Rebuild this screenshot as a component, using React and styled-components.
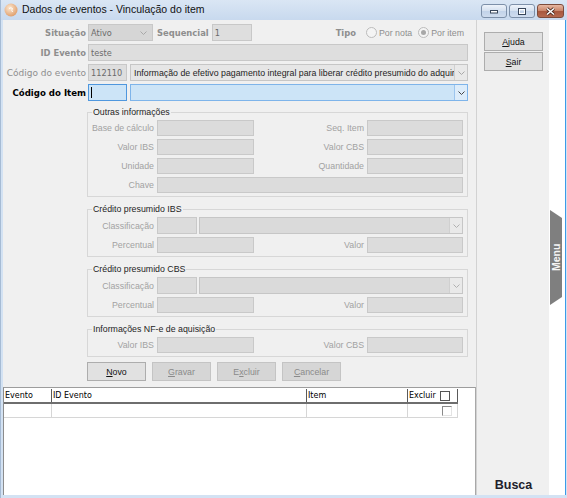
import React from "react";
import styled, { createGlobalStyle } from "styled-components";

const UI = `"Liberation Sans", Arial, sans-serif`;
const TAHOMA = `"DejaVu Sans", Verdana, sans-serif`;

const GlobalStyle = createGlobalStyle`
  html, body { margin: 0; padding: 0; }
  body { background: #ffffff; font-family: ${UI}; }
  * { box-sizing: border-box; }
`;

const Window = styled.div`
  width: 567px;
  height: 498px;
  display: flex;
  flex-direction: column;
  background: #d3e2f3;
  border-left: 1px solid #a6bbd4;
  overflow: hidden;
`;

const TitleBar = styled.div`
  height: 20px;
  flex: none;
  display: flex;
  align-items: flex-start;
  padding-left: 3px;
  background: linear-gradient(#dae6f4, #c8d9ee);
`;

const AppIcon = styled.svg`
  margin-top: 3px;
  flex: none;
`;

const Title = styled.span`
  margin: 3px 0 0 4px;
  font-family: ${UI};
  font-size: 10.5px;
  line-height: 13px;
  color: #111;
`;

const WinButtons = styled.div`
  margin: 4px 3px 0 auto;
  display: flex;
  gap: 2px;
`;

const WinButton = styled.div`
  width: ${(p) => (p.$close ? 27 : 26)}px;
  height: 14px;
  border: 1px solid ${(p) => (p.$close ? "#7c4b3b" : "#7d90a9")};
  border-radius: 3px;
  display: flex;
  align-items: center;
  justify-content: center;
  background: ${(p) =>
    p.$close
      ? "linear-gradient(#e7b7a2, #c98469 50%, #a8573d 52%, #b56a50)"
      : "linear-gradient(#eef3fa, #d4e0ef 50%, #c2d3e9 52%, #cfdcee)"};
`;

const Body = styled.div`
  flex: 1;
  display: flex;
  margin: 0 1px 3px 2px;
  min-height: 0;
`;

const Main = styled.div`
  width: 473px;
  flex: none;
  display: flex;
  flex-direction: column;
`;

const FormArea = styled.div`
  height: 367px;
  flex: none;
  background: #f0f0f0;
  padding-top: 4px;
  display: flex;
  flex-direction: column;
`;

const TopRows = styled.div`
  display: flex;
  flex-direction: column;
  gap: 3px;
`;

const Row = styled.div`
  display: flex;
  align-items: center;
  height: 17px;
  padding-right: ${(p) => p.$pr ?? 8}px;
`;

const Label = styled.span`
  width: ${(p) => (p.$w ? `${p.$w}px` : "auto")};
  flex: none;
  text-align: right;
  padding-right: ${(p) => p.$pr ?? 2}px;
  margin-left: ${(p) => p.$ml || 0}px;
  font-family: ${TAHOMA};
  font-size: ${(p) => p.$size || 8.4}px;
  font-weight: ${(p) => (p.$bold ? 700 : 400)};
  color: ${(p) => (p.$active ? "#000" : "#8e8e8e")};
  white-space: nowrap;
`;

const Field = styled.div`
  height: ${(p) => p.$h || 17}px;
  width: ${(p) => (p.$w ? `${p.$w}px` : "auto")};
  flex: ${(p) => (p.$w ? "none" : "1")};
  margin-left: ${(p) => p.$ml || 0}px;
  display: flex;
  align-items: center;
  padding: 0 2px;
  border: 1px solid ${(p) => (p.$focus ? "#4f97de" : "#c8c8c8")};
  background: ${(p) => (p.$focus ? "#cce4f7" : "#dedede")};
  font-family: ${TAHOMA};
  font-size: 8.2px;
  color: #6b6b6b;
  white-space: nowrap;
  overflow: hidden;
`;

const Caret = styled.span`
  width: 1px;
  height: 11px;
  background: #000;
`;

const Combo = styled.div`
  flex: 1;
  height: ${(p) => p.$h || 17}px;
  margin-left: ${(p) => p.$ml || 0}px;
  display: flex;
  align-items: stretch;
  border: 1px solid ${(p) => (p.$focus ? "#7eb4ea" : "#c6c6c6")};
  background: ${(p) => (p.$focus ? "#cce4f7" : p.$light ? "#e6e6e6" : "#dadada")};
  overflow: hidden;
`;

const ComboText = styled.span`
  flex: 1;
  min-width: 0;
  padding-left: 3px;
  display: flex;
  align-items: center;
  font-family: ${UI};
  font-size: 8.8px;
  color: #1e1e1e;
  white-space: nowrap;
  overflow: hidden;
`;

const ComboArrow = styled.span`
  width: 13px;
  flex: none;
  display: flex;
  align-items: center;
  justify-content: center;
  border-left: 1px solid ${(p) => (p.$focus ? "#9cc5ee" : "#d0d0d0")};
  background: ${(p) => (p.$focus ? "#dcecfa" : "#e9e9e9")};
`;

const Select = styled.div`
  width: 65px;
  flex: none;
  height: 17px;
  display: flex;
  align-items: center;
  justify-content: space-between;
  padding: 0 5px 0 2px;
  border: 1px solid #c8c8c8;
  background: #d6d6d6;
  font-family: ${TAHOMA};
  font-size: 8.2px;
  color: #6b6b6b;
`;

const Spacer = styled.span`
  flex: 1;
`;

const RadioGroup = styled.div`
  display: flex;
  align-items: center;
  gap: 6px;
  margin-left: 10px;
`;

const RadioItem = styled.label`
  display: flex;
  align-items: center;
  gap: 2px;
  font-family: ${UI};
  font-size: 8.8px;
  color: #8e8e8e;
`;

const RadioDot = styled.span`
  width: 11px;
  height: 11px;
  border-radius: 50%;
  border: 1px solid #bcbcbc;
  background: #f4f4f4;
  display: flex;
  align-items: center;
  justify-content: center;
  &::after {
    content: "";
    width: 5px;
    height: 5px;
    border-radius: 50%;
    background: ${(p) => (p.$checked ? "#a8a8a8" : "transparent")};
  }
`;

const Groups = styled.div`
  margin: 6px 8px 0 84px;
  display: flex;
  flex-direction: column;
  gap: 7px;
`;

const Group = styled.fieldset`
  margin: 0;
  padding: 3px 4px 3px 0;
  border: 1px solid #d7d7d7;
  display: flex;
  flex-direction: column;
  gap: 3px;
  min-width: 0;
`;

const Legend = styled.legend`
  margin-left: 4px;
  padding: 0 1px;
  font-family: ${UI};
  font-size: 8.8px;
  line-height: 10px;
  color: #1e1e1e;
`;

const GroupRow = styled.div`
  display: grid;
  grid-template-columns: 66px 97px 1fr 96px;
  column-gap: 3px;
  align-items: center;
  height: ${(p) => p.$h || 16}px;
`;

const GLabel = styled.span`
  text-align: right;
  font-family: ${UI};
  font-size: 8.8px;
  color: #a2a2a2;
  white-space: nowrap;
`;

const GField = styled.div`
  height: 100%;
  width: ${(p) => (p.$w ? `${p.$w}px` : "auto")};
  flex: none;
  grid-column: ${(p) => p.$span || "auto"};
  border: 1px solid #c9c9c9;
  background: #dcdcdc;
`;

const ClassBox = styled.div`
  grid-column: 2 / 5;
  height: 100%;
  display: flex;
  gap: 2px;
`;

const ButtonRow = styled.div`
  margin: 5px 0 0 84px;
  display: flex;
  gap: 6px;
`;

const Button = styled.div`
  width: 59px;
  height: 19px;
  flex: none;
  display: flex;
  align-items: center;
  justify-content: center;
  border: 1px solid ${(p) => (p.$disabled ? "#c4c4c4" : "#adadad")};
  background: ${(p) => (p.$disabled ? "#d6d6d6" : "#e1e1e1")};
  font-family: ${UI};
  font-size: 8.8px;
  color: ${(p) => (p.$disabled ? "#8a8a8a" : "#111")};
  u {
    text-decoration: underline;
  }
`;

const Grid = styled.div`
  flex: 1;
  background: #fff;
  border-top: 1px solid #9d9d9d;
  border-left: 1px solid #8c8c8c;
  border-right: 1px solid #a8a8a8;
  padding-top: 1px;
`;

const GridRow = styled.div`
  display: grid;
  grid-template-columns: 48px 255px 101px 50px;
  width: 454px;
  height: ${(p) => (p.$head ? 15 : 14)}px;
  border-bottom: ${(p) => (p.$head ? "2px solid #6e6e6e" : "1px solid #d6d6d6")};
`;

const Cell = styled.div`
  display: flex;
  align-items: center;
  padding-left: 1px;
  border-right: 1px solid ${(p) => (p.$head ? "#5a5a5a" : "#d6d6d6")};
  font-family: ${TAHOMA};
  font-size: 8px;
  color: #000;
  justify-content: ${(p) => (p.$check ? "flex-end" : "flex-start")};
  padding-right: ${(p) => (p.$check ? 5 : 0)}px;
  gap: 4px;
`;

const CheckBox = styled.span`
  width: 10px;
  height: 10px;
  border: 1px solid #555;
  background: #fff;
  ${(p) =>
    p.$sunken &&
    `border-color: #8a8a8a #e3e3e3 #e3e3e3 #8a8a8a;`}
`;

const SidePanel = styled.div`
  width: 73px;
  flex: none;
  background: #f0f0f0;
  border-left: 1px solid #d2d2d2;
  padding: 12px 6px 3px 7px;
  display: flex;
  flex-direction: column;
  gap: 1px;
`;

const Busca = styled.div`
  margin-top: auto;
  text-align: center;
  font-family: ${UI};
  font-size: 12.5px;
  font-weight: 700;
  color: #20202c;
`;

const MenuStrip = styled.div`
  width: 17px;
  flex: none;
  background: #fff;
  border-right: 1px solid #3b9be8;
  padding: 190px 0 0 1px;
`;

const MenuTab = styled.div`
  height: 95px;
  background: #7f7f7f;
  clip-path: polygon(0 8px, 100% 0, 100% 100%, 0 calc(100% - 8px));
  display: flex;
  align-items: center;
  justify-content: center;
  writing-mode: vertical-rl;
  transform: rotate(180deg);
  font-family: ${UI};
  font-size: 10.5px;
  font-weight: 700;
  color: #f4f4f4;
`;

const Chevron = ({ color = "#9a9a9a" }) => (
  <svg width="7" height="4" viewBox="0 0 7 4">
    <polyline points="0.5,0.5 3.5,3.5 6.5,0.5" fill="none" stroke={color} strokeWidth="1" />
  </svg>
);

export default function App() {
  return (
    <>
      <GlobalStyle />
      <Window>
        <TitleBar>
          <AppIcon width="14" height="14" viewBox="0 0 14 14">
            <defs>
              <radialGradient id="ig" cx="40%" cy="35%" r="65%">
                <stop offset="0" stopColor="#fde9d2" />
                <stop offset="1" stopColor="#e0a06e" />
              </radialGradient>
            </defs>
            <circle cx="7" cy="7" r="6.5" fill="url(#ig)" />
            <path d="M5 5.5 Q7 4 8.5 5.5 Q7 7 8.5 9" fill="none" stroke="#fff" strokeWidth="1" />
          </AppIcon>
          <Title>Dados de eventos - Vinculação do item</Title>
          <WinButtons>
            <WinButton>
              <svg width="10" height="6" viewBox="0 0 10 6">
                <rect x="1.5" y="2.5" width="7" height="2.5" fill="#fff" stroke="#38465a" strokeWidth="1" />
              </svg>
            </WinButton>
            <WinButton>
              <svg width="10" height="9" viewBox="0 0 10 9">
                <rect x="1.5" y="1.5" width="7" height="6" fill="none" stroke="#38465a" strokeWidth="1" />
                <rect x="2.5" y="2.5" width="5" height="4" fill="none" stroke="#fff" strokeWidth="1" />
              </svg>
            </WinButton>
            <WinButton $close>
              <svg width="11" height="9" viewBox="0 0 11 9">
                <path d="M2 1.5 L9 7.5 M9 1.5 L2 7.5" stroke="#4a2a20" strokeWidth="3" />
                <path d="M2 1.5 L9 7.5 M9 1.5 L2 7.5" stroke="#fff" strokeWidth="1.6" />
              </svg>
            </WinButton>
          </WinButtons>
        </TitleBar>

        <Body>
          <Main>
            <FormArea>
              <TopRows>
                <Row $pr={12}>
                  <Label $w={85} $bold>Situação</Label>
                  <Select>
                    <span>Ativo</span>
                    <Chevron color="#a8a8a8" />
                  </Select>
                  <Label $ml={4} $pr={3} $bold>Sequencial</Label>
                  <Field $w={40}>1</Field>
                  <Spacer />
                  <Label $pr={0} $bold>Tipo</Label>
                  <RadioGroup>
                    <RadioItem>
                      <RadioDot />
                      Por nota
                    </RadioItem>
                    <RadioItem>
                      <RadioDot $checked />
                      Por item
                    </RadioItem>
                  </RadioGroup>
                </Row>
                <Row>
                  <Label $w={85} $bold>ID Evento</Label>
                  <Field>teste</Field>
                </Row>
                <Row>
                  <Label $w={85} $size={9}>Código do evento</Label>
                  <Field $w={39}>112110</Field>
                  <Combo $ml={3} $light>
                    <ComboText>
                      Informação de efetivo pagamento integral para liberar crédito presumido do adquire
                    </ComboText>
                    <ComboArrow>
                      <Chevron color="#a8a8a8" />
                    </ComboArrow>
                  </Combo>
                </Row>
                <Row>
                  <Label $w={85} $bold $active $size={8.6}>Código do Item</Label>
                  <Field $w={39} $focus>
                    <Caret />
                  </Field>
                  <Combo $ml={3} $focus>
                    <ComboText />
                    <ComboArrow $focus>
                      <Chevron color="#444" />
                    </ComboArrow>
                  </Combo>
                </Row>
              </TopRows>

              <Groups>
                <Group>
                  <Legend>Outras informações</Legend>
                  <GroupRow>
                    <GLabel>Base de cálculo</GLabel>
                    <GField />
                    <GLabel>Seq. Item</GLabel>
                    <GField />
                  </GroupRow>
                  <GroupRow>
                    <GLabel>Valor IBS</GLabel>
                    <GField />
                    <GLabel>Valor CBS</GLabel>
                    <GField />
                  </GroupRow>
                  <GroupRow>
                    <GLabel>Unidade</GLabel>
                    <GField />
                    <GLabel>Quantidade</GLabel>
                    <GField />
                  </GroupRow>
                  <GroupRow>
                    <GLabel>Chave</GLabel>
                    <GField $span="2 / 5" />
                  </GroupRow>
                </Group>

                {["IBS", "CBS"].map((tax) => (
                  <Group key={tax}>
                    <Legend>Crédito presumido {tax}</Legend>
                    <GroupRow $h={17}>
                      <GLabel>Classificação</GLabel>
                      <ClassBox>
                        <GField $w={40} />
                        <Combo $h={17}>
                          <ComboText />
                          <ComboArrow>
                            <Chevron color="#b0b0b0" />
                          </ComboArrow>
                        </Combo>
                      </ClassBox>
                    </GroupRow>
                    <GroupRow>
                      <GLabel>Percentual</GLabel>
                      <GField />
                      <GLabel>Valor</GLabel>
                      <GField />
                    </GroupRow>
                  </Group>
                ))}

                <Group>
                  <Legend>Informações NF-e de aquisição</Legend>
                  <GroupRow>
                    <GLabel>Valor IBS</GLabel>
                    <GField />
                    <GLabel>Valor CBS</GLabel>
                    <GField />
                  </GroupRow>
                </Group>
              </Groups>

              <ButtonRow>
                <Button><span><u>N</u>ovo</span></Button>
                <Button $disabled><span><u>G</u>ravar</span></Button>
                <Button $disabled><span>E<u>x</u>cluir</span></Button>
                <Button $disabled><span><u>C</u>ancelar</span></Button>
              </ButtonRow>
            </FormArea>

            <Grid>
              <GridRow $head>
                <Cell $head>Evento</Cell>
                <Cell $head>ID Evento</Cell>
                <Cell $head>Item</Cell>
                <Cell $head>
                  Excluir
                  <CheckBox />
                </Cell>
              </GridRow>
              <GridRow>
                <Cell />
                <Cell />
                <Cell />
                <Cell $check>
                  <CheckBox $sunken />
                </Cell>
              </GridRow>
            </Grid>
          </Main>

          <SidePanel>
            <Button><span><u>A</u>juda</span></Button>
            <Button><span><u>S</u>air</span></Button>
            <Busca>Busca</Busca>
          </SidePanel>

          <MenuStrip>
            <MenuTab>Menu</MenuTab>
          </MenuStrip>
        </Body>
      </Window>
    </>
  );
}
